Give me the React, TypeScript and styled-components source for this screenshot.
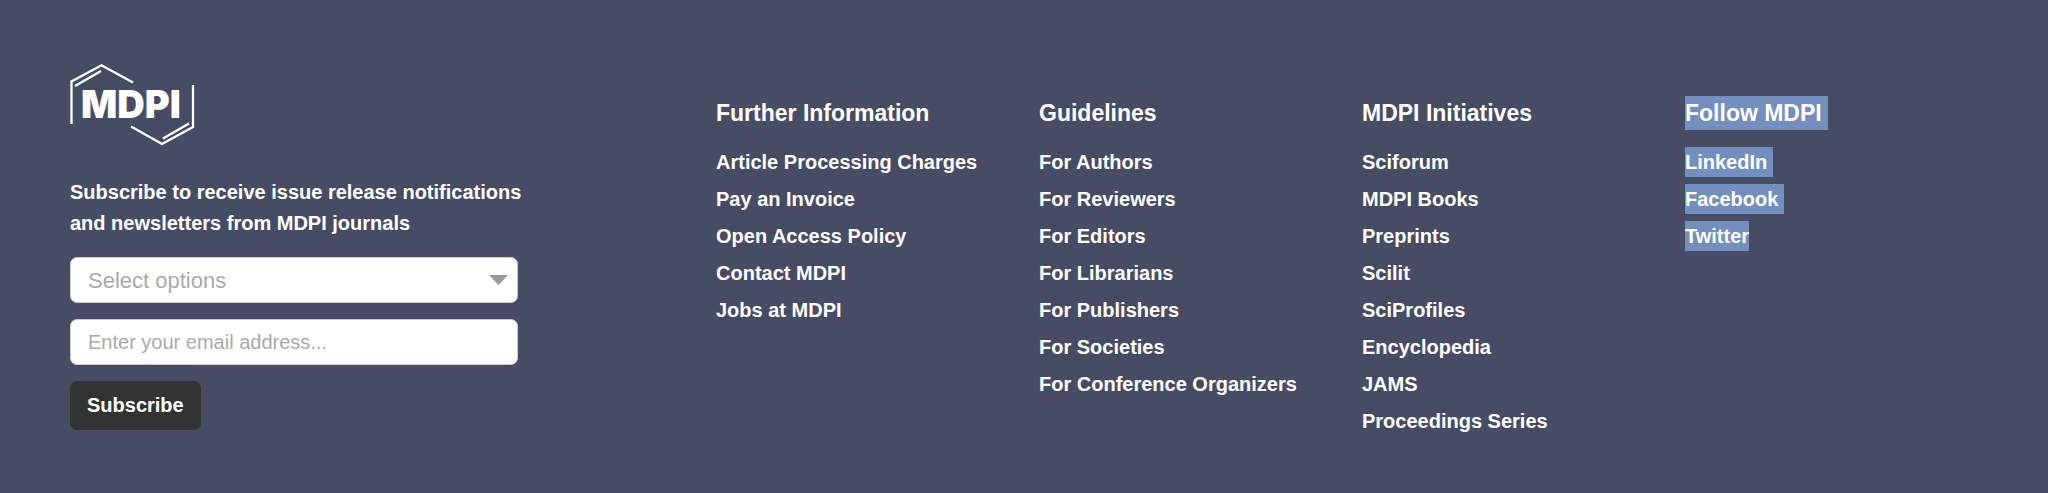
import React from "react";
import styled, { createGlobalStyle } from "styled-components";

const GlobalStyle = createGlobalStyle`
  *, *::before, *::after { box-sizing: border-box; }
  body {
    margin: 0;
    background: #474c65;
    color: #fff;
    font-family: "Liberation Sans", Arial, sans-serif;
    font-size: 20px;
  }
`;

const Footer = styled.footer`
  display: grid;
  grid-template-columns: 2fr repeat(4, 1fr);
  padding: 64px 40px 62px 70px;

  @media (max-width: 1500px) {
    grid-template-columns: repeat(auto-fit, minmax(280px, 1fr));
    gap: 32px 16px;
  }
`;

const SubscribePanel = styled.section`
  max-width: 470px;
`;

const LogoLink = styled.a`
  display: block;
  width: 125px;
  margin-bottom: 31px;

  svg { display: block; }
`;

const LogoText = styled.text`
  font-family: Inter, "Liberation Sans", sans-serif;
  font-size: 38px;
  font-weight: 900;
`;

const Form = styled.form`
  display: flex;
  flex-direction: column;
  align-items: stretch;
  gap: 16px;
  max-width: 448px;
`;

const Intro = styled.p`
  margin: 0 0 18px;
  font-weight: 700;
  line-height: 31px;
`;

const SelectWrap = styled.div`
  position: relative;

  svg {
    position: absolute;
    top: 18px;
    right: 10px;
    pointer-events: none;
  }
`;

const Select = styled.select`
  display: block;
  appearance: none;
  width: 100%;
  height: 46px;
  padding: 0 40px 0 17px;
  border: 1px solid #ccc;
  border-radius: 7px;
  background: #fff;
  color: #aaa;
  font-family: inherit;
  font-size: 22px;
`;

const EmailInput = styled.input`
  display: block;
  width: 100%;
  height: 46px;
  padding: 0 17px;
  border: 1px solid #ccc;
  border-radius: 7px;
  background: #fff;
  color: #333;
  font-family: inherit;
  font-size: 20px;

  &::placeholder { color: #aaa; opacity: 1; }
`;

const SubscribeButton = styled.button`
  align-self: flex-start;
  height: 49px;
  padding: 0 17px;
  border: 0;
  border-radius: 7px;
  background: #333;
  color: #fff;
  font-family: inherit;
  font-size: 20px;
  font-weight: 700;
  cursor: pointer;
`;

const Column = styled.nav`
  padding-top: 32px;
`;

const Heading = styled.h3`
  display: flex;
  margin: 0 0 17px;
  font-size: 23px;
  line-height: 34px;
`;

const LinkList = styled.ul`
  display: flex;
  flex-direction: column;
  gap: 7px;
  margin: 0;
  padding: 0;
  list-style: none;
`;

const LinkItem = styled.li`
  display: flex;
  line-height: 30px;
  white-space: nowrap;
`;

const FooterLink = styled.a`
  color: #fff;
  font-weight: 700;
  text-decoration: none;

  &:hover { text-decoration: underline; }
`;

const Label = styled.span<{ $selected?: boolean; $lineEnd?: boolean }>`
  display: block;
  padding-right: ${(p) => (p.$lineEnd ? "6px" : "0")};
  background: ${(p) => (p.$selected ? "#728fbf" : "transparent")};
`;

interface LinkGroup {
  title: string;
  links: string[];
  selected?: boolean;
}

const groups: LinkGroup[] = [
  {
    title: "Further Information",
    links: ["Article Processing Charges", "Pay an Invoice", "Open Access Policy", "Contact MDPI", "Jobs at MDPI"],
  },
  {
    title: "Guidelines",
    links: [
      "For Authors",
      "For Reviewers",
      "For Editors",
      "For Librarians",
      "For Publishers",
      "For Societies",
      "For Conference Organizers",
    ],
  },
  {
    title: "MDPI Initiatives",
    links: [
      "Sciforum",
      "MDPI Books",
      "Preprints",
      "Scilit",
      "SciProfiles",
      "Encyclopedia",
      "JAMS",
      "Proceedings Series",
    ],
  },
  { title: "Follow MDPI", links: ["LinkedIn", "Facebook", "Twitter"], selected: true },
];

function Logo() {
  return (
    <svg width="125" height="82" viewBox="0 0 125 82" aria-hidden="true">
      <g fill="none" stroke="#fff" strokeWidth="2.3">
        <path d="M1.5 60V17.5L31.5 1.3L63 18.5" />
        <path d="M5 22L31 7" />
        <path d="M123 21V63L92 80L61 62.5" />
        <path d="M93 74.5L119 59.5" />
      </g>
      <LogoText x="11" y="54" fill="#fff">
        MDPI
      </LogoText>
    </svg>
  );
}

export default function App() {
  return (
    <>
      <GlobalStyle />
      <Footer>
        <SubscribePanel>
          <LogoLink href="#" aria-label="MDPI home">
            <Logo />
          </LogoLink>
          <Intro>Subscribe to receive issue release notifications and newsletters from MDPI journals</Intro>
          <Form onSubmit={(e) => e.preventDefault()}>
            <SelectWrap>
              <Select aria-label="Journals" defaultValue="">
                <option value="">Select options</option>
              </Select>
              <svg width="19" height="10" viewBox="0 0 19 10" aria-hidden="true">
                <path d="M0 0H19L9.5 10Z" fill="#999" />
              </svg>
            </SelectWrap>
            <EmailInput type="email" aria-label="Email address" placeholder="Enter your email address..." />
            <SubscribeButton type="submit">Subscribe</SubscribeButton>
          </Form>
        </SubscribePanel>
        {groups.map((group) => (
          <Column key={group.title} aria-label={group.title}>
            <Heading>
              <Label $selected={group.selected} $lineEnd>
                {group.title}
              </Label>
            </Heading>
            <LinkList>
              {group.links.map((link, i) => (
                <LinkItem key={link}>
                  <FooterLink href="#">
                    <Label $selected={group.selected} $lineEnd={i < group.links.length - 1}>
                      {link}
                    </Label>
                  </FooterLink>
                </LinkItem>
              ))}
            </LinkList>
          </Column>
        ))}
      </Footer>
    </>
  );
}
